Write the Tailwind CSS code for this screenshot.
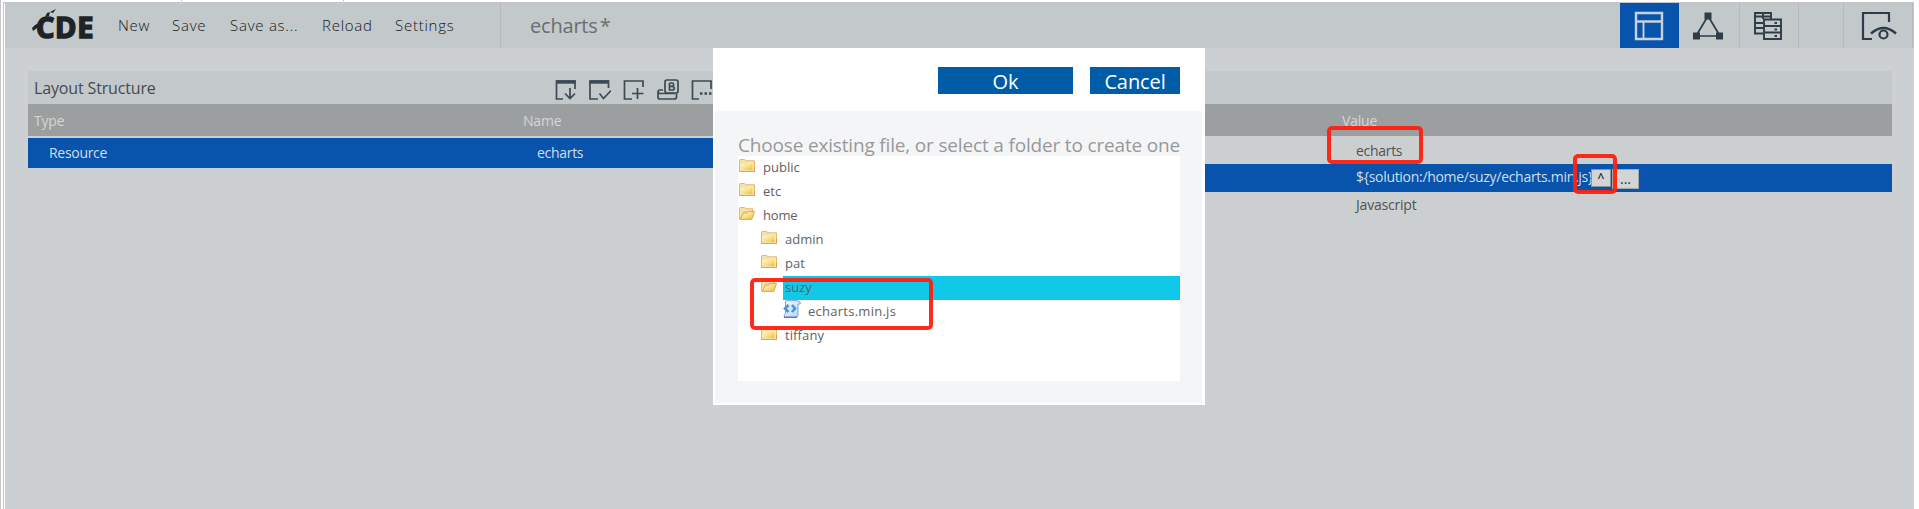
<!DOCTYPE html>
<html lang="en">
<head>
<meta charset="utf-8">
<title>CDE - echarts</title>
<script src="https://cdn.jsdelivr.net/npm/@tailwindcss/browser@4"></script>
</head>
<body class="bg-white font-['Open_Sans','Noto_Sans',sans-serif]">
<svg class="absolute h-0 w-0">
  <defs>
    <linearGradient id="gold" x1="0" y1="0" x2="1" y2="1"><stop offset="0" stop-color="#fdf6d6"/><stop offset=".5" stop-color="#f8e08a"/><stop offset="1" stop-color="#efbd2c"/></linearGradient>
    <linearGradient id="page" x1="0" y1="0" x2="1" y2="1"><stop offset="0" stop-color="#f4f9fe"/><stop offset="1" stop-color="#b4d2f2"/></linearGradient>
    <symbol id="closed" viewBox="0 0 16 13"><path d="M.5 12V1.2Q.5.5 1.2.5H5.6L7 1.8H15.5V12.4H.5Z" fill="#f6e2a4" stroke="#e5b768"/><path d="M2 5H7.5L9 3.8H14V11.5H2Z" fill="url(#gold)" stroke="#fbefc4" stroke-width=".7"/><path d="M.5 12.4H15.5V8" fill="none" stroke="#dd9d5a"/></symbol>
    <symbol id="open" viewBox="0 0 16 13"><path d="M.5 12V1.2Q.5.5 1.2.5H5.6L7 1.8H13.5V5H5L1.5 12.4Z" fill="#f6e2a4" stroke="#e5b768"/><path d="M1.2 12.4 4.3 6H7.8L9.2 4.4H15.5L12.8 12.4Z" fill="url(#gold)" stroke="#dfa458"/></symbol>
  </defs>
</svg>
<div class="relative h-[509px] w-[1919px] overflow-hidden bg-white pt-[3px]">
  <div class="absolute left-0 top-0 h-full w-px bg-[#c9c9c9]"></div>
  <div class="absolute left-[3px] top-[2px] h-full w-[1911px] border-l border-t border-[#c4c4c4]"></div>
  <div class="absolute left-[181px] top-0 h-px w-px bg-[#b5b5b5]"></div>
  <div class="absolute left-[343px] top-0 h-px w-px bg-[#b5b5b5]"></div>

  <main class="relative ml-[5px] h-[506px] w-[1909px] bg-[#ccd0d3]">
    <header class="flex h-[45px] bg-[#c3c8ca]">
      <div class="flex w-[495px] items-center">
        <div class="relative ml-[26px] h-[45px] w-[87px]">
          <div class="absolute left-[5px] top-[3px] text-[29px]/[41px] font-bold tracking-[0.6px] text-[#1e2426] [-webkit-text-stroke:1.6px_#1e2426]">CDE</div>
          <svg class="absolute left-0 top-[5px]" width="30" height="24" fill="#1e2426"><path d="M14 9 16 5 19 4 18 8ZM19 4 25 1 22 5ZM1 20 4 17 8 15 6 20 2 23Z"/></svg>
        </div>
        <nav class="flex text-[15px] font-light text-[#15191b] tracking-[0.75px]">
          <span class="w-[54px]">New</span><span class="w-[58px]">Save</span><span class="w-[92px] whitespace-nowrap">Save as...</span><span class="w-[73px]">Reload</span><span>Settings</span>
        </nav>
      </div>
      <div class="flex flex-1 items-center border-l border-[#b5b9bb] pl-[29px] text-[20px] text-[#6a6e70] tracking-[-0.2px]">echarts<span class="ml-[2px]">*</span></div>
      <div class="flex">
        <div class="flex w-[59px] items-center justify-center bg-[#0854ad] pr-[2px]">
          <svg width="30" height="30" fill="none" stroke="#c9d2da"><path stroke-width="2.400" d="M2 2H28V28H2ZM2 10.5H28"/><path stroke-width="1.900" d="M9.5 10V28"/></svg>
        </div>
        <div class="flex w-[61px] items-center justify-center border-r border-[#b5b9bb] pr-[2px]">
          <svg width="32" height="30" stroke="#2e3c47" stroke-width="1.7" fill="#2e3c47"><path fill="none" d="M16 5 4 25H28Z"/><path stroke="none" d="M12.5 1.5h7v7h-7ZM1 21.500h7v7H1ZM24 21.500h7v7h-7Z"/></svg>
        </div>
        <div class="flex w-[59px] items-center justify-center border-r border-[#b5b9bb] pr-[3px]">
          <svg width="30" height="30" fill="none" stroke="#2e3c47" stroke-width="1.900"><path d="M10 22.500H2V2H18V8M2 5.500H18M2 12H10M2 17H10M10 2V8"/><path d="M11 8.500H28V28H11ZM11 15H28M11 21.500H28"/><path d="M21.500 12h2.500M21.500 18.500h2.500M21.500 25h2.500" stroke-width="2"/></svg>
        </div>
        <div class="w-[45px] border-r border-[#b5b9bb]"></div>
        <div class="flex w-[69px] items-center border-r border-[#b5b9bb] pl-[17px]">
          <svg width="36" height="30" fill="none" stroke="#2e3c47" stroke-width="2.200"><path d="M28 11V2H2V28H11"/><path stroke-width="2.500" d="M10 22.500Q22.500 11.500 35 22.500"/><circle cx="22.500" cy="23.500" r="4"/></svg>
        </div>
        <div class="w-px"></div>
      </div>
    </header>

    <div class="flex justify-between pt-[23px] pl-[23px] pr-[22px]">
      <section class="w-[900px]">
        <div class="flex h-[33px] items-center bg-[#c3c8ca] pl-[6px] text-[16px] text-[#454a4d]">
          <h2 class="w-[521px] tracking-[-0.15px]">Layout Structure</h2>
          <div class="flex gap-[12px] pt-[4px]">
            <svg width="22" height="22" fill="none" stroke="#3d4a54" stroke-width="1.700"><path d="M8 20H1.500V2H20V10"/><path d="M1 3H20.700" stroke-width="3.400"/><path d="M15 9V19.500M10 14.500 15 19.500 20 14.500"/></svg>
            <svg width="22" height="22" fill="none" stroke="#3d4a54" stroke-width="1.700"><path d="M9 20H1V2H19.500V9"/><path d="M.5 3H20" stroke-width="3.400"/><path d="M10.500 14.500 14.500 19.500 22 11.500"/></svg>
            <svg width="22" height="22" fill="none" stroke="#3d4a54" stroke-width="1.700"><path d="M9 20H1.500V2H20V8"/><path d="M14.500 9V20M9 14.500H20.500"/></svg>
            <svg width="22" height="22" fill="none" stroke="#3d4a54" stroke-width="1.700"><rect x="8" y="1" width="13" height="13" rx="2"/><path d="M12.500 4V11H15Q17.500 11 17.300 9Q17 7.500 15 7.300H12.500M15 7.300Q16.700 7 16.700 5.700Q16.500 4 15 4H12.500"/><path d="M6 11H3Q1 11 1 13Q1 14.500 4 14.500H18M1 13V18Q1 20 3 20H17Q19.500 20 19.500 18V15"/></svg>
            <svg width="22" height="22" fill="none" stroke="#3d4a54" stroke-width="1.700"><path d="M8 20H1.500V2H20V10"/><path d="M9 14.500h2.500M13.500 14.500H16M18 14.500h2.500" stroke-width="2.500"/></svg>
          </div>
        </div>
        <div class="flex h-[32px] items-center bg-[#9c9f9f] pl-[6px] text-[14px] text-[#d3d6d7] tracking-[-0.2px]"><span class="w-[489px]">Type</span><span>Name</span></div>
        <div class="mt-[2px] flex h-[30px] items-center bg-[#0854ad] pb-[2px] pl-[21px] text-[14px] text-[#d3dde6] tracking-[-0.3px]"><span class="w-[488px]">Resource</span><span>echarts</span></div>
      </section>
      <section class="w-[919px] text-[14px] text-[#505354]">
        <div class="h-[33px] bg-[#c3c8ca]"></div>
        <div class="flex h-[32px] items-center bg-[#9c9f9f] pl-[369px] text-[#d3d6d7] tracking-[-0.2px]">Value</div>
        <div class="flex h-[28px] items-center bg-[#cbcfd0] pl-[383px] pt-px tracking-[-0.3px]">echarts</div>
        <div class="flex h-[28px] items-center bg-[#0854ad] pl-[383px] text-[#d3dde6]">
          <span class="w-[235px] overflow-hidden whitespace-nowrap pb-[3px] tracking-[-0.3px]">${solution:/home/suzy/echarts.min.js}</span>
          <span class="mb-px flex h-[18px] w-[20px] items-center justify-center border border-[#8d9091] bg-[#d1d5d6] text-[12px]/[16px] font-semibold text-[#222]">^</span>
          <span class="ml-px mt-px flex h-[20px] w-[27px] items-center justify-center border border-[#a3a7a8] bg-[#d1d5d6] text-[14px]/[18px] text-[#333]">...</span>
        </div>
        <div class="flex h-[28px] items-center bg-[#cbcfd0] pl-[383px] pb-[3px] tracking-[-0.2px]">Javascript</div>
      </section>
    </div>
  </main>

  <div class="absolute left-[713px] top-[48px] flex h-[357px] w-[492px] flex-col bg-white px-[2px] pb-[2px] text-[20px] pr-[3px]">
    <div class="flex h-[63px] items-start justify-end gap-[17px] pt-[19px] pr-[22px] text-white">
      <button class="h-[27px] w-[135px] bg-[#005ca7] leading-[29px]">Ok</button>
      <button class="h-[27px] w-[90px] bg-[#005ca7] leading-[29px] tracking-[-0.1px]">Cancel</button>
    </div>
    <div class="flex-1 bg-[#f4f5f7] pt-[21px] pl-[23px] pr-[22px]">
      <p class="h-[24px] whitespace-nowrap text-[19px]/[26px] tracking-[-0.17px] text-[#999]">Choose existing file, or select a folder to create one</p>
      <div class="h-[225px] bg-white text-[13px]/[22px] text-[#5f6163]">
        <div class="flex h-[24px] gap-[8px] pl-[1px]"><svg class="mt-[3px]" width="16" height="13"><use href="#closed"/></svg>public</div>
        <div class="flex h-[24px] gap-[8px] pl-[1px]"><svg class="mt-[3px]" width="16" height="13"><use href="#closed"/></svg>etc</div>
        <div class="flex h-[24px] gap-[8px] pl-[1px]"><svg class="mt-[3px]" width="16" height="13"><use href="#open"/></svg><span class="tracking-[-0.2px]">home</span></div>
        <div class="flex h-[24px] gap-[8px] pl-[23px]"><svg class="mt-[3px]" width="16" height="13"><use href="#closed"/></svg><span>admin</span></div>
        <div class="flex h-[24px] gap-[8px] pl-[23px]"><svg class="mt-[3px]" width="16" height="13"><use href="#closed"/></svg>pat</div>
        <div class="flex h-[24px] gap-[6px] pl-[23px]"><svg class="mt-[3px]" width="16" height="13"><use href="#open"/></svg><span class="flex-1 bg-[#10c8e7] pl-[2px]">suzy</span></div>
        <div class="flex h-[24px] gap-[7px] pl-[45px]"><svg width="18" height="18"><path d="M2.500 1Q4 .3 6 .7H15Q17.500 1 17.300 4H15V14Q15.500 17 13 17.300H3Q.8 17 1 15Q3 14 2.500 11Z" fill="url(#page)" stroke="#7fa5d0"/><path d="M1 17.300H14" stroke="#4c76ad" stroke-width="1.300"/><path d="M5.500 5 2 8.500 5.500 12M9 5 12 8.500 9 12" fill="none" stroke="#4595e6" stroke-width="2.600"/></svg><span class="tracking-[0.26px]">echarts.min.js</span></div>
        <div class="flex h-[24px] gap-[8px] pl-[23px]"><svg class="mt-[3px]" width="16" height="13"><use href="#closed"/></svg><span class="tracking-[0.1px]">tiffany</span></div>
      </div>
    </div>
  </div>

  <!-- Highlight frames -->
  <div class="absolute left-[1327px] top-[126px] h-[38px] w-[96px] rounded-[5px] border-4 border-[#ff2010]/95"></div>
  <div class="absolute left-[1573px] top-[154px] h-[40px] w-[44px] rounded-[5px] border-4 border-[#ff2010]/95"></div>
  <div class="absolute left-[750px] top-[278px] h-[52px] w-[183px] rounded-[5px] border-4 border-[#ff2010]/95"></div>
</div>
</body>
</html>
